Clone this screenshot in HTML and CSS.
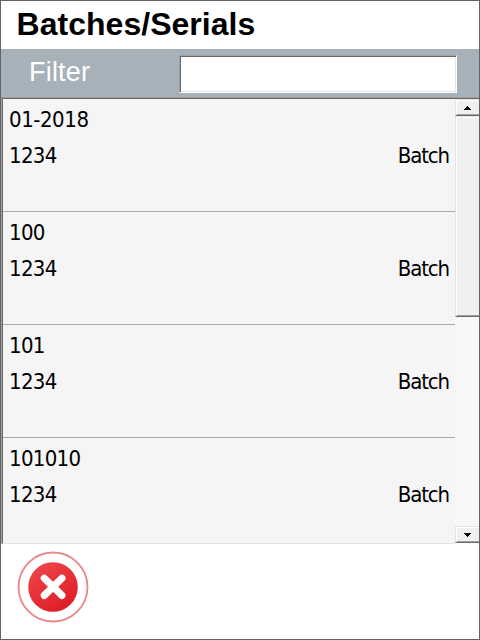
FILE: index.html
```html
<!DOCTYPE html>
<html lang="en">
<head>
<meta charset="utf-8">
<title>Batches/Serials</title>
<link rel="stylesheet" href="styles.css">
</head>
<body>
<main class="window">
  <h1 class="title">Batches/Serials</h1>
  <div class="filter">
    <label class="filter-label" for="filter">Filter</label>
    <input class="filter-input" id="filter" type="text">
  </div>
  <section class="list">
    <div class="rows">
      <article class="row"><div class="name dashed">01-2018</div><div class="detail"><span>1234</span><span class="kind">Batch</span></div></article>
      <article class="row"><div class="name">100</div><div class="detail"><span>1234</span><span class="kind">Batch</span></div></article>
      <article class="row"><div class="name">101</div><div class="detail"><span>1234</span><span class="kind">Batch</span></div></article>
      <article class="row"><div class="name">101010</div><div class="detail"><span>1234</span><span class="kind">Batch</span></div></article>
    </div>
    <div class="scrollbar">
      <div class="raised arrow">
        <svg width="7" height="4" viewBox="0 0 7 4" shape-rendering="crispEdges"><path d="M3 0h1v1h1v1h1v1h1v1H0V3h1V2h1V1h1z"/></svg>
      </div>
      <div class="raised thumb"></div>
      <div class="track"></div>
      <div class="raised arrow">
        <svg width="7" height="4" viewBox="0 0 7 4" shape-rendering="crispEdges"><path d="M0 0h7v1H6v1H5v1H4v1H3V3H2V2H1V1H0z"/></svg>
      </div>
    </div>
  </section>
  <footer class="footer">
    <button class="close" aria-label="Close">
      <svg width="72" height="72" viewBox="0 0 72 72">
        <defs>
          <linearGradient id="red" x1="0.2" y1="0" x2="0.8" y2="1">
            <stop offset="0" stop-color="#ee454c"/>
            <stop offset="1" stop-color="#dd1c22"/>
          </linearGradient>
        </defs>
        <circle cx="36" cy="36" r="34.5" fill="#fff" stroke="#ea8589" stroke-width="1.8"/>
        <circle cx="36" cy="36" r="24.8" fill="url(#red)"/>
        <path d="M27.3 27.2L44.9 44.4M44.9 27.2L27.3 44.4" stroke="#fff" stroke-width="7.2" stroke-linecap="round"/>
      </svg>
    </button>
  </footer>
</main>
</body>
</html>
```

FILE: styles.css
```css
* {
  box-sizing: border-box;
}

body {
  margin: 0;
}

.window {
  display: flex;
  flex-direction: column;
  width: 480px;
  height: 640px;
  border: 1px solid #646464;
  background: #fff;
  overflow: hidden;
  font-family: "Liberation Sans", Arial, sans-serif;
}

.title {
  height: 48px;
  margin: 0;
  padding-left: 15.5px;
  font-size: 32px;
  line-height: 46px;
  font-weight: bold;
  letter-spacing: 0.03px;
  color: #000;
}

.filter {
  display: flex;
  height: 48px;
  padding: 6px 22px 4px 28px;
  background: #a7b1ba;
}

.filter-label {
  width: 150px;
  font-size: 27px;
  line-height: 35px;
  letter-spacing: 0.2px;
  color: #fff;
}

.filter-input {
  width: 278px;
  height: 38px;
  padding: 0 4px;
  border: 1px solid;
  border-color: #a0a0a0 #fff #fff #a0a0a0;
  border-radius: 0;
  outline: none;
  background: #fff;
  box-shadow: inset 1px 1px #696969, inset -1px -1px #e3e3e3;
  font: 22px "Liberation Sans", Arial, sans-serif;
}

.list {
  display: flex;
  height: 447px;
  border-top: 1px solid #a0a0a0;
  border-left: 1px solid #a0a0a0;
}

.rows {
  flex: 1;
  border-top: 1px solid #696969;
  border-left: 1px solid #696969;
  border-bottom: 1px solid #e3e3e3;
  background: #f5f5f5;
  overflow: hidden;
}

.row {
  height: 113px;
  padding: 3px 6px 0;
  border-bottom: 1px solid #a9a9a9;
  font-family: "DejaVu Sans Condensed", "DejaVu Sans", sans-serif;
  font-stretch: condensed;
  font-size: 22px;
  line-height: 36px;
  letter-spacing: -0.7px;
  color: #000;
}

.dashed {
  letter-spacing: -0.45px;
}

.detail {
  display: flex;
  justify-content: space-between;
}

.kind {
  letter-spacing: -1.15px;
}

.scrollbar {
  display: flex;
  flex-direction: column;
  width: 24px;
  height: 445px;
  margin-bottom: 1px;
  border-top: 1px solid #696969;
}

.raised {
  border-left: 1px solid #e3e3e3;
  border-top: 1px solid #e3e3e3;
  border-bottom: 1px solid #696969;
  background: #f0f0f0;
  box-shadow: inset 1px 1px #fff, inset 0 -1px #a0a0a0;
}

.arrow {
  display: flex;
  flex: none;
  align-items: center;
  justify-content: center;
  height: 17px;
}

.thumb {
  height: 201px;
}

.track {
  flex: 1;
  background: repeating-conic-gradient(#fff 0 25%, #f0f0f0 0 50%) 0 0 / 2px 2px;
}

.footer {
  flex: 1;
  padding: 7px 16px;
}

.close {
  display: block;
  padding: 0;
  border: 0;
  background: none;
}

.close svg {
  display: block;
}
```
